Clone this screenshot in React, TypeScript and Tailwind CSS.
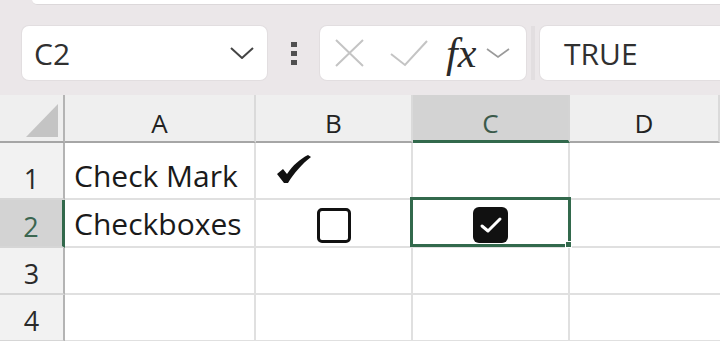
import React from "react";

const GREEN = "#32694c";
const UI_FONT = { fontFamily: '"Open Sans", "Noto Sans", sans-serif' };

function CheckMark() {
  return (
    <svg width="34" height="29" viewBox="0 0 34 29" className="text-[#111]">
      <path
        d="M0 19 L6 14 L10 19 C16 10 23 4 31 0 L34 2 C25 9 17 18 11 28 L7 28 Z"
        fill="currentColor"
      />
    </svg>
  );
}

function EmptyBox() {
  return <div className="h-[35px] w-[34px] rounded-[5px] border-[3px] border-[#111] bg-white" />;
}

function CheckedBox() {
  return (
    <div className="flex h-[36px] w-[35px] items-center justify-center rounded-[6px] bg-[#111]">
      <svg width="24" height="20" viewBox="0 0 24 20">
        <path d="M3 11 L9 16 L21 4" fill="none" stroke="white" strokeWidth="3" strokeLinecap="round" strokeLinejoin="round" />
      </svg>
    </div>
  );
}

function FormulaBar() {
  return (
    <div className="h-[95px] bg-[#ebe7e9]">
      <div className="ml-[32px] h-[5px] rounded-bl-[6px] border-b border-[#dcd8da] bg-white" />
      <div className="mt-[21px] flex h-[54px] items-stretch">
        <div
          className="ml-[22px] flex w-[245px] items-center justify-between rounded-[7px] bg-white pl-[12px] pr-[13px] text-[30px] text-[#303030] shadow-[0_0_0_1px_#e2dee0]"
          style={UI_FONT}
        >
          <span>C2</span>
          <svg width="24" height="12" viewBox="0 0 24 12">
            <path d="M1 1 L12 11 L23 1" fill="none" stroke="#444" strokeWidth="2" />
          </svg>
        </div>
        <div className="flex w-[53px] flex-col items-center justify-center gap-[4px]">
          <div className="h-[5px] w-[6px] bg-[#505050]" />
          <div className="h-[5px] w-[6px] bg-[#505050]" />
          <div className="h-[5px] w-[6px] bg-[#505050]" />
        </div>
        <div className="flex w-[206px] items-center rounded-[7px] bg-white pl-[15px] shadow-[0_0_0_1px_#e2dee0]">
          <svg width="29" height="28" viewBox="0 0 29 28">
            <path d="M1 1 L28 27 M28 1 L1 27" stroke="#c4c4c4" strokeWidth="2" />
          </svg>
          <svg width="38" height="27" viewBox="0 0 38 27" className="ml-[26px]">
            <path d="M1 14 L15 25 L37 1" fill="none" stroke="#c4c4c4" strokeWidth="2" />
          </svg>
          <span
            className="ml-[18px] text-[42px] italic leading-none text-[#2a2a2a]"
            style={{ fontFamily: '"Liberation Serif", "DejaVu Serif", serif' }}
          >
            fx
          </span>
          <svg width="24" height="10" viewBox="0 0 24 10" className="ml-[10px]">
            <path d="M1 1 L12 9 L23 1" fill="none" stroke="#9a9a9a" strokeWidth="1.6" />
          </svg>
        </div>
        <div className="flex w-[14px] justify-center">
          <div className="h-full w-[4px] bg-[#e2dee0]" />
        </div>
        <div
          className="flex flex-1 items-center rounded-l-[7px] bg-white pl-[24px] text-[30px] text-[#303030] shadow-[0_0_0_1px_#e2dee0]"
          style={UI_FONT}
        >
          TRUE
        </div>
      </div>
    </div>
  );
}

const cols = ["A", "B", "C", "D"];
const rowHeights = ["h-[57px]", "h-[48px]", "h-[47px]", "h-[47px]"];

export default function App() {
  return (
    <div className="h-[341px] w-[720px] overflow-hidden bg-white">
      <FormulaBar />
      <div className="grid grid-cols-[65px_191px_157px_157px_1fr]" style={UI_FONT}>
        {/* header row */}
        <div className="relative h-[48px] border-r-2 border-b-2 border-r-[#b4b4b4] border-b-[#a6a6a6] bg-[#efefef]">
          <svg width="32" height="33" viewBox="0 0 32 33" className="absolute right-[5px] bottom-[4px]">
            <path d="M32 0 L32 33 L0 33 Z" fill="#c4c4c4" />
          </svg>
        </div>
        {cols.map((c) => (
          <div
            key={c}
            className={
              c === "C"
                ? "flex h-[48px] items-end justify-center border-r-2 border-b-[3px] border-r-[#d4d4d4] border-b-[#32694c] bg-[#d3d3d3] pb-[4px] text-[26px] leading-none text-[#3b5a4a]"
                : "flex h-[48px] items-end justify-center border-r-2 border-b-2 border-r-[#dadada] border-b-[#a6a6a6] bg-[#efefef] pb-[5px] text-[26px] leading-none text-[#222]"
            }
          >
            {c}
          </div>
        ))}

        {rowHeights.map((h, i) => {
          const r = i + 1;
          const selRow = r === 2;
          return (
            <React.Fragment key={r}>
              <div
                className={
                  selRow
                    ? `flex ${h} items-end justify-center border-r-[3px] border-b-2 border-r-[#32694c] border-b-[#d6d6d6] bg-[#d3d3d3] pb-[6px] text-[27px] leading-none text-[#3b6650]`
                    : `flex ${h} items-end justify-center border-r-2 border-b-2 border-r-[#b4b4b4] border-b-[#d6d6d6] bg-[#f2f2f2] pb-[6px] text-[27px] leading-none text-[#2a2a2a]`
                }
              >
                {r}
              </div>
              {/* A */}
              <div className={`flex ${h} items-end border-r-2 border-b-2 border-[#e0e0e0] pb-[7px] pl-[9px] text-[30px] leading-none text-[#1a1a1a]`}>
                {r === 1 ? "Check Mark" : r === 2 ? "Checkboxes" : ""}
              </div>
              {/* B */}
              <div className={`flex ${h} border-r-2 border-b-2 border-[#e0e0e0]`}>
                {r === 1 && (
                  <div className="pl-[21px] pt-[12px]">
                    <CheckMark />
                  </div>
                )}
                {r === 2 && (
                  <div className="flex flex-1 justify-center pt-[8px]">
                    <EmptyBox />
                  </div>
                )}
              </div>
              {/* C */}
              <div className={`relative flex ${h} border-r-2 border-b-2 border-[#e0e0e0]`}>
                {r === 2 && (
                  <>
                    <div className="flex flex-1 justify-center pt-[7px]">
                      <CheckedBox />
                    </div>
                    <div
                      className="pointer-events-none absolute -top-[3px] -left-[3px] -right-[3px] -bottom-[1px] border-[3px]"
                      style={{ borderColor: GREEN }}
                    />
                    <div className="absolute -right-[4px] -bottom-[2px] h-[7px] w-[7px] border border-white bg-[#32694c]" />
                  </>
                )}
              </div>
              {/* D */}
              <div className={`${h} border-b-2 border-[#e0e0e0]`} />
            </React.Fragment>
          );
        })}
      </div>
    </div>
  );
}
